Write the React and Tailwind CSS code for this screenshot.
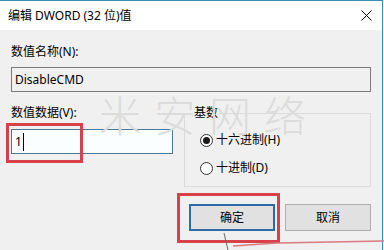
import React from "react";

function Radio({ checked, label }) {
  return (
    <div className="flex items-center h-[16px]">
      <span className="w-[13px] h-[13px] rounded-full border border-[#333333] bg-white flex items-center justify-center">
        {checked && <span className="w-[7px] h-[7px] rounded-full bg-[#1a1a1a]" />}
      </span>
      <span className="ml-[3px] text-[12px] leading-[16px] text-black">{label}</span>
    </div>
  );
}

export default function App() {
  return (
    <div className="w-[384px] h-[250px] bg-[#f4f8fa] overflow-hidden relative font-['Noto_Sans','Noto_Sans_CJK_SC',sans-serif]">
      <div className="w-[383px] h-[250px] bg-[#f0f0f0] border-t border-r border-[#3b8db5] flex flex-col">
        <div className="h-[29px] bg-white flex items-center justify-between pl-[8px] pr-[10px] shrink-0">
          <span className="text-[12px] leading-[16px] text-black">编辑 DWORD (32 位)值</span>
          <svg width="11" height="11" viewBox="0 0 11 11" className="text-black">
            <path d="M0.5 0.5 L10.5 10.5 M10.5 0.5 L0.5 10.5" stroke="currentColor" strokeWidth="1" />
          </svg>
        </div>
        <div className="px-[11px] flex flex-col">
          <div className="mt-[14px] text-[12px] leading-[16px] text-black">数值名称(N):</div>
          <div className="mt-[7px] h-[25px] border border-[#7a7a7a] bg-[#f0f0f0] pl-[3px] flex items-center text-[12px] text-black">
            DisableCMD
          </div>
          <div className="mt-[13px] flex">
            <div className="w-[162px] flex flex-col">
              <div className="text-[12px] leading-[16px] text-black">数值数据(V):</div>
              <div className="mt-[8px] h-[25px] border border-[#4a7895] bg-[#fbfeff] pl-[3px] flex items-center text-[12px] text-black">
                <span>1</span>
                <span className="w-px h-[18px] bg-black ml-[1px]" />
              </div>
            </div>
            <div className="ml-[11px] flex-1 relative">
              <div className="mt-[8px] h-[74px] border border-[#dcdcdc] pl-[15px] pt-[18px] flex flex-col gap-[12px]">
                <Radio checked label="十六进制(H)" />
                <Radio label="十进制(D)" />
              </div>
              <span className="absolute top-0 left-[9px] px-[1px] bg-[#f0f0f0] text-[12px] leading-[16px] text-black">基数</span>
            </div>
          </div>
          <div className="mt-[17px] flex justify-end gap-[10px]">
            <button className="w-[86px] h-[27px] border-2 border-[#2d6ca6] bg-[#e1e1e1] text-[12px] text-black flex items-center justify-center">
              确定
            </button>
            <button className="w-[86px] h-[27px] border border-[#adadad] bg-[#e1e1e1] text-[12px] text-black flex items-center justify-center">
              取消
            </button>
          </div>
        </div>
      </div>

      <div className="absolute left-[99px] top-[95px] text-[42px] leading-none tracking-[13px] text-[#dcdcdc] font-light pointer-events-none">
        米安网络
      </div>

      <div className="absolute left-[6px] top-[123px] w-[77px] h-[40px] border-[3px] border-[#d9414a]" />
      <div className="absolute left-[177px] top-[193px] w-[103px] h-[50px] border-[3px] border-[#d9414a]" />

      <svg className="absolute left-0 top-0 pointer-events-none" width="384" height="250">
        <path d="M224 233 L228 250" stroke="#6a6a6a" strokeWidth="1" />
        <path d="M233 246 L277 243 L384 241" stroke="#d97a7e" strokeWidth="1.5" fill="none" />
      </svg>
    </div>
  );
}
